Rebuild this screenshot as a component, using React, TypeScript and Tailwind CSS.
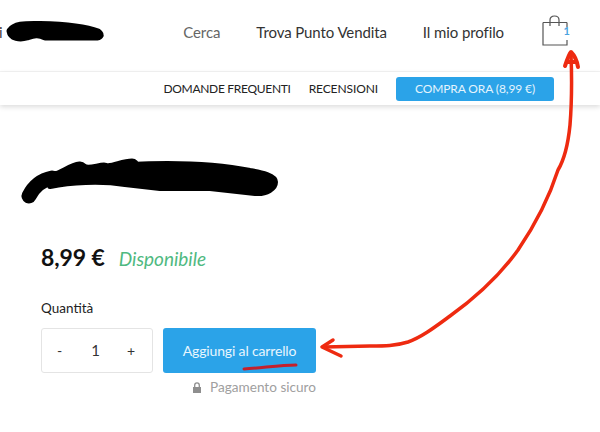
const Annotations = () => (
  <svg className="absolute inset-0 pointer-events-none" width="600" height="432" viewBox="0 0 600 432" fill="none">
    {/* logo scribble */}
    <path d="M10 31 C14 25 24 24 40 24.5 C60 25 85 27 98 32 C102 35 100 37 95 37 L45 37 C38 33 33 35 27 37 C20 39 11 38 10 31 Z" fill="#000" stroke="#000" strokeWidth="7" strokeLinejoin="round" />
    {/* title scribble */}
    <path d="M29 196 C34 186 42 180 52 178 C60 181 70 170 80 169 C86 176 98 170 104 170 C112 173 122 166 132 166" stroke="#000" strokeWidth="15" strokeLinecap="round" strokeLinejoin="round" />
    <path d="M50 186 C70 182 100 180 125 184 L160 188 L210 188 L255 193 C267 194 275 188 275 182 C275 176 262 173 250 171 C225 166 190 162 130 165 Z" fill="#000" stroke="#000" strokeWidth="6" strokeLinejoin="round" />
    {/* red arrow */}
    <path d="M571 54 C572 80 572 100 570 125 C568 145 564 160 558 170 C550 195 535 225 518 250 C500 275 475 298 450 316 C435 327 422 337 408 342 C395 346 385 346 370 346 L324 347" stroke="#ee2a10" strokeWidth="3.5" strokeLinecap="round" strokeLinejoin="round" />
    <path d="M565 66 C567 60 569 54 571 52 C574 55 577 61 578 67 M568 62 L575 62" stroke="#ee2a10" strokeWidth="4" strokeLinecap="round" strokeLinejoin="round" />
    <path d="M333 340 L322 347 L341 356" stroke="#ee2a10" strokeWidth="3.5" strokeLinecap="round" strokeLinejoin="round" />
    {/* underline */}
    <path d="M244 369 C262 368 280 365 296 365" stroke="#c4202c" strokeWidth="3" strokeLinecap="round" />
  </svg>
);

const App = () => {
  return (
    <div className="relative w-[600px] h-[432px] overflow-hidden bg-white font-['Lato',sans-serif]">
      <header className="flex items-center justify-between h-[72px] pb-[6px] pr-[32px] border-b border-[#f4f4f4]">
        <span className="text-[15px] text-[#444] -ml-[1px]">i</span>
        <nav className="flex items-center">
          <a className="text-[15px] tracking-[-0.1px] text-[#666] mr-[36px]">Cerca</a>
          <a className="text-[15px] tracking-[-0.1px] text-[#333] mr-[36px]">Trova Punto Vendita</a>
          <a className="text-[15px] tracking-[-0.1px] text-[#333] mr-[38px]">Il mio profilo</a>
          <span className="relative w-[26px] h-[31px] -mt-[4px]">
            <svg width="26" height="31" viewBox="0 0 26 31" fill="none" stroke="#555" strokeWidth="1.2">
              <path d="M1 7.5 H25 M25 7.5 V12 M25 25 V30 H1 V7.5" />
              <path d="M8 11 V5 C8 2.5 10 1 12.5 1 C15 1 17 2.5 17 5 V11" />
            </svg>
            <span className="absolute right-[-2px] top-[10px] text-[11px] leading-[12px] font-bold text-[#4aa3e0]">1</span>
          </span>
        </nav>
      </header>

      <div className="flex items-center justify-end h-[33px] pr-[46px] shadow-[0_2px_5px_rgba(0,0,0,0.14)]">
        <a className="text-[12px] tracking-[-0.3px] text-[#222] mr-[18px]">DOMANDE FREQUENTI</a>
        <a className="text-[12px] tracking-[-0.1px] text-[#222] mr-[18px]">RECENSIONI</a>
        <button className="w-[158px] h-[24px] rounded-[3px] bg-[#2ba3e8] text-[12px] tracking-[-0.1px] text-[#e4f4fd]">
          COMPRA ORA (8,99 €)
        </button>
      </div>

      <main className="pl-[41px] pt-[135px]">
        <div className="flex items-baseline gap-[14px] h-[32px]">
          <span className="text-[23px] font-bold tracking-[-0.1px] text-[#111]">8,99 €</span>
          <span className="text-[19px] italic text-[#4fb981]">Disponibile</span>
        </div>
        <p className="mt-[27px] text-[13.5px] leading-[18px] text-[#222]">Quantità</p>
        <div className="flex gap-[10px] mt-[11px]">
          <div className="flex items-center justify-between w-[112px] h-[45px] pl-[15px] pr-[17px] rounded-[3px] border border-[#e4e4e4] text-[#333]">
            <span className="text-[14px]">-</span>
            <span className="text-[15px] ml-[2px]">1</span>
            <span className="text-[14px]">+</span>
          </div>
          <div className="w-[153px]">
            <button className="w-full h-[45px] rounded-[3px] bg-[#2ba3e8] text-[14px] tracking-[-0.15px] text-[#e8f6fe]">
              Aggiungi al carrello
            </button>
            <div className="flex items-center justify-end gap-[8px] mt-[6px] text-[13.6px] leading-[16px] text-[#a0a0a0]">
              <svg width="10" height="11" viewBox="0 0 10 11" fill="#8e8e8e">
                <path d="M1 5 H9 V11 H1 Z" />
                <path d="M2.7 5 V3.3 C2.7 1.8 3.7 0.8 5 0.8 C6.3 0.8 7.3 1.8 7.3 3.3 V5" fill="none" stroke="#8e8e8e" strokeWidth="1.3" />
              </svg>
              <span>Pagamento sicuro</span>
            </div>
          </div>
        </div>
      </main>

      <Annotations />
    </div>
  );
};

export default App;
